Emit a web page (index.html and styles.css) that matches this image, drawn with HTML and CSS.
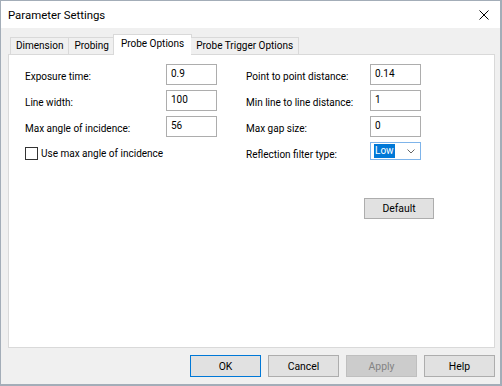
FILE: index.html
```html
<!DOCTYPE HTML>
<html lang="en">
<head>
  <meta charset="UTF-8">
  <title>Parameter Settings</title>

  <link rel="stylesheet" href="styles.css">
</head>
<body>

	<div class="window">

	  <div class="titlebar">
		<span class="title">Parameter Settings</span>
		<span class="close">
			<svg width="10" height="10" viewBox="0 0 10 10">
				<path d="M0.5 0.5 L9.5 9.5 M9.5 0.5 L0.5 9.5" stroke="#000" stroke-width="1" fill="none"/>
			</svg>
		</span>
	  </div>

	  <div class="client">

		<div class="tabs">
			<div class="tab tab-first">Dimension</div>
			<div class="tab">Probing</div>
			<div class="tab tab-active">Probe Options</div>
			<div class="tab">Probe Trigger Options</div>
		</div>

		<div class="panel">

			<div class="fields">
				<label class="label">Exposure time:</label>
				<div class="edit">0.9</div>
				<span></span>
				<label class="label">Point to point distance:</label>
				<div class="edit">0.14</div>

				<label class="label">Line width:</label>
				<div class="edit">100</div>
				<span></span>
				<label class="label">Min line to line distance:</label>
				<div class="edit">1</div>

				<label class="label">Max angle of incidence:</label>
				<div class="edit">56</div>
				<span></span>
				<label class="label">Max gap size:</label>
				<div class="edit">0</div>

				<div class="check-row">
					<span class="checkbox"></span>
					<span>Use max angle of incidence</span>
				</div>
				<span></span>
				<label class="label">Reflection filter type:</label>
				<div class="combo">
					<span class="combo-value">Low</span>
					<svg class="chevron" width="8" height="5" viewBox="0 0 8 5">
						<path d="M0.5 0.5 L4 4 L7.5 0.5" stroke="#666" stroke-width="1" fill="none"/>
					</svg>
				</div>
			</div>

			<div class="default-row">
				<button class="button">Default</button>
			</div>

		</div>

		<div class="buttons">
			<button class="button button-default">OK</button>
			<button class="button">Cancel</button>
			<button class="button button-disabled">Apply</button>
			<button class="button">Help</button>
		</div>

	  </div>
	</div>

</body>
</html>
```

FILE: styles.css
```css
	 html {
		height:100%;
	 }

	 body {
		margin:0;
		font-family:Roboto, "Noto Sans", sans-serif;
		font-size:10px;
		color:#000;
	 }

	 .window {
		width:502px;
		height:386px;
		box-sizing:border-box;
		border:1px solid #a3adb8;
		border-bottom-width:2px;
		border-right-width:2px;
		display:flex;
		flex-direction:column;
		background:#f0f0f0;
	 }

	 .titlebar {
		height:27px;
		background:#fff;
		display:flex;
		align-items:center;
		justify-content:space-between;
		padding:0 10px 0 7px;
	 }

	 .title {
		font-size:11.4px;
	 }

	 .close {
		display:flex;
		margin-right:1px;
	 }

	 .client {
		flex:1;
		display:flex;
		flex-direction:column;
		padding:6px 5px 0 7px;
	 }

	 .tabs {
		display:flex;
		align-items:flex-end;
		height:20px;
		padding-left:2px;
		position:relative;
		z-index:1;
	 }

	 .tab {
		height:16px;
		line-height:16px;
		padding:0 5px;
		border:1px solid #d9d9d9;
		border-bottom:none;
		border-left:none;
		background:#f0f0f0;
		white-space:nowrap;
	 }

	 .tab-first {
		border-left:1px solid #d9d9d9;
	 }

	 .tab-active {
		height:20px;
		line-height:18px;
		background:#fff;
		border-left:1px solid #d9d9d9;
		margin:0 -1px -1px -2px;
		padding:0 7px;
	 }

	 .panel {
		height:294px;
		box-sizing:border-box;
		background:#fff;
		border:1px solid #d9d9d9;
		padding:9px 0 0 16px;
	 }

	 .fields {
		display:grid;
		grid-template-columns:141px 51px 29px 124px 51px;
		grid-auto-rows:21px;
		row-gap:5px;
		align-items:center;
		white-space:nowrap;
	 }

	 .label {
		padding-top:4px;
	 }

	 .edit {
		height:21px;
		box-sizing:border-box;
		border:1px solid #adadad;
		padding:1px 4px;
		line-height:16px;
	 }

	 .check-row {
		grid-column:1 / 3;
		display:flex;
		align-items:center;
		gap:3px;
		padding-top:2px;
	 }

	 .checkbox {
		width:13px;
		height:13px;
		box-sizing:border-box;
		border:1px solid #333;
		background:#fff;
	 }

	 .combo {
		height:18px;
		box-sizing:border-box;
		border:1px solid #7eb4ea;
		display:flex;
		align-items:center;
		justify-content:space-between;
		padding:0 5px 0 3px;
		align-self:start;
	 }

	 .combo-value {
		background:#0078d7;
		color:#fff;
		line-height:14px;
		padding:0 1px;
	 }

	 .default-row {
		padding:35px 0 0 339px;
	 }

	 .button {
		width:70px;
		height:21px;
		box-sizing:border-box;
		border:1px solid #adadad;
		background:#e1e1e1;
		font-family:inherit;
		font-size:10.4px;
		color:#000;
		padding:0;
	 }

	 .buttons {
		display:flex;
		justify-content:flex-end;
		gap:7px;
		padding:7px 0 0 0;
	 }

	 .buttons .button {
		width:71px;
		height:22px;
	 }

	 .button-default {
		border:1px solid #0078d7;
	 }

	 .button-disabled {
		background:#cccccc;
		border-color:#bfbfbf;
		color:#838383;
	 }
```
